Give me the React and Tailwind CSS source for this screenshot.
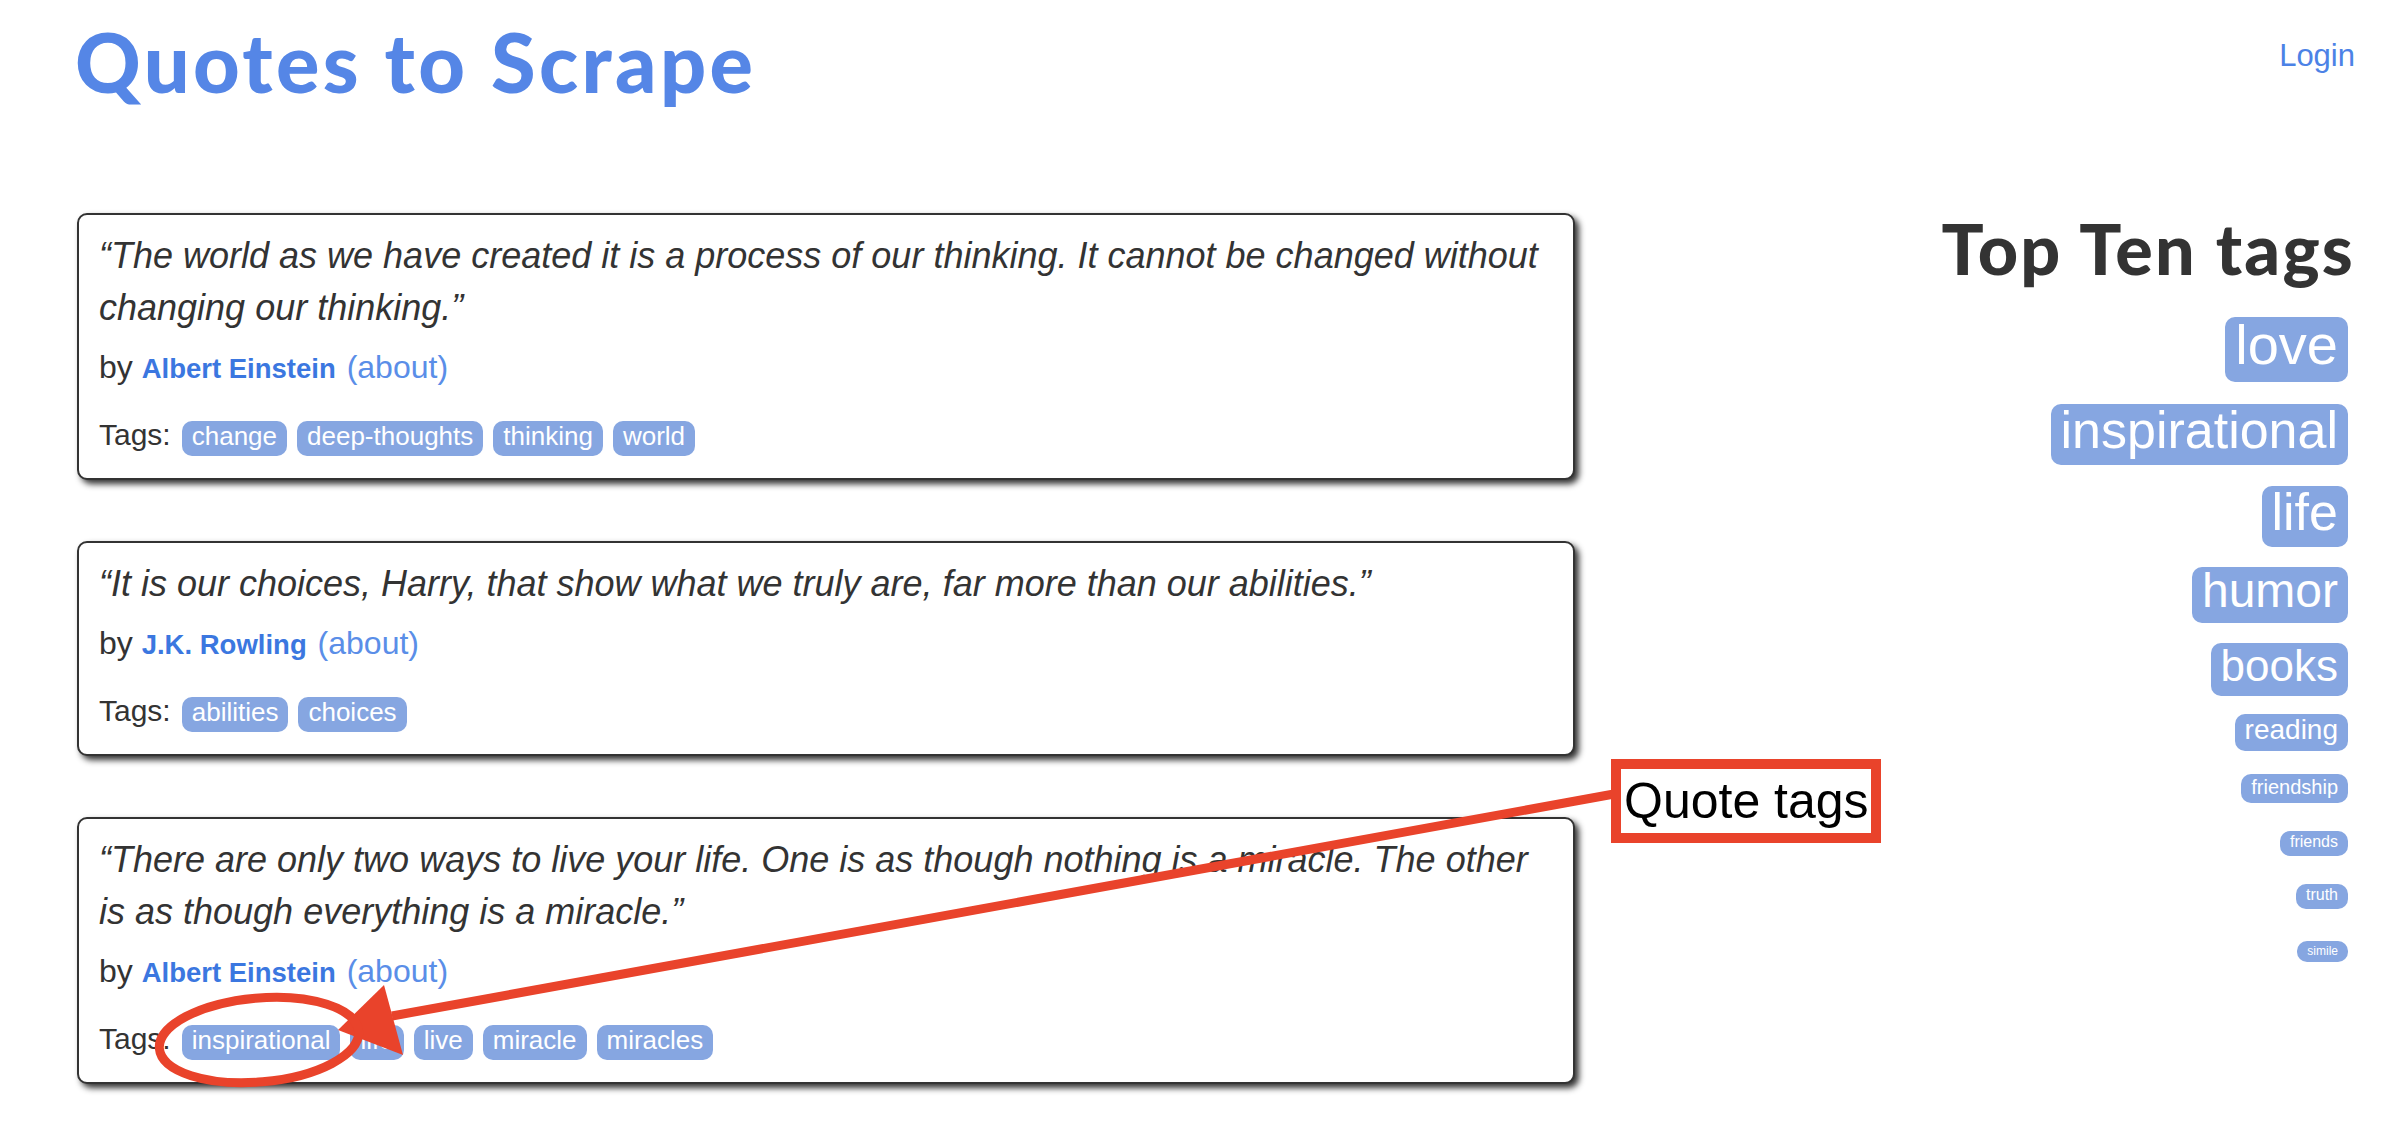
import React from "react";

const quotes = [
  {
    lines: [
      "\u201CThe world as we have created it is a process of our thinking. It cannot be changed without",
      "changing our thinking.\u201D",
    ],
    author: "Albert Einstein",
    tags: ["change", "deep-thoughts", "thinking", "world"],
  },
  {
    lines: ["\u201CIt is our choices, Harry, that show what we truly are, far more than our abilities.\u201D"],
    author: "J.K. Rowling",
    tags: ["abilities", "choices"],
  },
  {
    lines: [
      "\u201CThere are only two ways to live your life. One is as though nothing is a miracle. The other",
      "is as though everything is a miracle.\u201D",
    ],
    author: "Albert Einstein",
    tags: ["inspirational", "life", "live", "miracle", "miracles"],
  },
];

const topTags = [
  { name: "love", cls: "text-[56px] h-[65px] pb-[10px] mt-[34px]" },
  { name: "inspirational", cls: "text-[52px] h-[61px] pb-[9px] mt-[22px]" },
  { name: "life", cls: "text-[52px] h-[61px] pb-[9px] mt-[21px]" },
  { name: "humor", cls: "text-[48px] h-[56px] pb-[9px] mt-[20px]" },
  { name: "books", cls: "text-[44px] h-[53px] pb-[8px] mt-[20px]" },
  { name: "reading", cls: "text-[28px] h-[37px] pb-[5px] mt-[18px]" },
  { name: "friendship", cls: "text-[20px] h-[29px] pb-[4px] mt-[23px]" },
  { name: "friends", cls: "text-[16px] h-[25px] pb-[3px] mt-[28px]" },
  { name: "truth", cls: "text-[16px] h-[25px] pb-[3px] mt-[28px]" },
  { name: "simile", cls: "text-[12px] h-[21px] pb-[2px] mt-[32px]" },
];

function QuoteCard({ q }) {
  return (
    <div className="border-2 border-[#333] rounded-[10px] shadow-[4px_4px_6px_#333] pt-[15px] pb-[22px] px-[20px] bg-white">
      <p className="italic text-[36px] leading-[52px] text-[#333] whitespace-nowrap">
        {q.lines.map((l, i) => (
          <React.Fragment key={i}>
            {l}
            {i < q.lines.length - 1 && <br />}
          </React.Fragment>
        ))}
      </p>
      <div className="mt-[10px] text-[32px] leading-[46px] text-[#333]">
        by <span className="text-[27.5px] font-bold text-[#3b77e0]">{q.author}</span>{" "}
        <span className="ml-[2px] text-[#5a8ee8]">(about)</span>
      </div>
      <div className="mt-[28px] flex items-baseline gap-[10px]">
        <span className="text-[30px] leading-[30px] text-[#333] mr-[1px]">Tags:</span>
        {q.tags.map((t) => (
          <span
            key={t}
            className="inline-block rounded-[10px] bg-[#86a6e1] text-white text-[26px] leading-[26px] px-[10px] pt-[2px] pb-[7px]"
          >
            {t}
          </span>
        ))}
      </div>
    </div>
  );
}

export default function App() {
  return (
    <div className="relative w-[2400px] h-[1130px] bg-white overflow-hidden font-['Liberation_Sans',Arial,sans-serif]">
      <div className="pl-[77px] pr-[45px]">
        <header className="flex justify-between items-start h-[213px]">
          <h1 className="mt-[21px] -ml-[2px] font-['Lato',sans-serif] font-black text-[81px] leading-none text-[#5586e6] tracking-[3.4px]">
            Quotes to Scrape
          </h1>
          <a className="mt-[40px] text-[31px] leading-none text-[#4c82e6]">Login</a>
        </header>
        <div className="flex justify-between">
          <div className="w-[1498px] flex flex-col gap-[61px]">
            {quotes.map((q, i) => (
              <QuoteCard key={i} q={q} />
            ))}
          </div>
          <div className="flex flex-col items-end">
            <h2 className="font-['Lato',sans-serif] font-black text-[70px] leading-none text-[#333] tracking-[2.2px]">
              Top Ten tags
            </h2>
            {topTags.map((t) => (
              <span
                key={t.name}
                className={
                  "mr-[7px] flex items-center rounded-[10px] bg-[#86a6e1] text-white leading-none px-[10px] " + t.cls
                }
              >
                {t.name}
              </span>
            ))}
          </div>
        </div>
      </div>

      <svg className="absolute left-0 top-0 pointer-events-none" width="2400" height="1130" viewBox="0 0 2400 1130">
        <line x1="1614" y1="794" x2="392" y2="1016" stroke="#e9432b" strokeWidth="9" />
        <polygon points="338,1030 384,985 403,1055" fill="#e9432b" />
        <ellipse cx="259" cy="1040" rx="100" ry="42" fill="none" stroke="#e9432b" strokeWidth="9" transform="rotate(-5 259 1040)" />
      </svg>
      <div className="absolute left-[1611px] top-[759px] w-[270px] h-[84px] border-[10px] border-[#e9432b] bg-white pl-[3px] text-[50px] leading-[64px] text-black whitespace-nowrap">
        Quote tags
      </div>
    </div>
  );
}
